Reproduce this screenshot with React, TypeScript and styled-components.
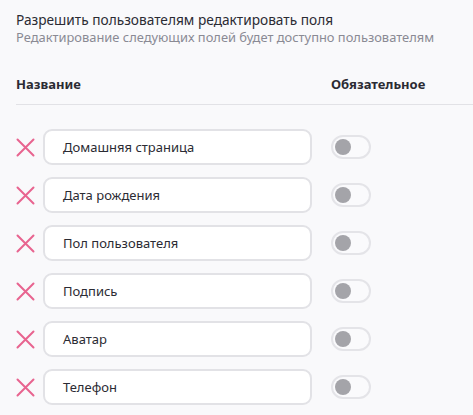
import styled, { createGlobalStyle } from "styled-components";

const fields = [
  "Домашняя страница",
  "Дата рождения",
  "Пол пользователя",
  "Подпись",
  "Аватар",
  "Телефон",
];

const GlobalStyle = createGlobalStyle`
  body {
    margin: 0;
    background: #f9f9fb;
    font-family: "Noto Sans", "Open Sans", sans-serif;
    color: #2b2b33;
  }
`;

const RemoveIcon = () => (
  <svg width="19" height="19" viewBox="0 0 19 19">
    <path
      d="M1.5 1.5 L17.5 17.5 M17.5 1.5 L1.5 17.5"
      stroke="#e8648f"
      strokeWidth="2"
      strokeLinecap="round"
    />
  </svg>
);

export default function App() {
  return (
    <Root>
      <GlobalStyle />
      <Title>Разрешить пользователям редактировать поля</Title>
      <Subtitle>Редактирование следующих полей будет доступно пользователям</Subtitle>
      <Header>
        <HeaderName>Название</HeaderName>
        <HeaderRequired>Обязательное</HeaderRequired>
      </Header>
      <List>
        {fields.map((f) => (
          <Row key={f}>
            <RemoveButton>
              <RemoveIcon />
            </RemoveButton>
            <FieldBox>{f}</FieldBox>
            <Toggle>
              <Knob />
            </Toggle>
          </Row>
        ))}
      </List>
    </Root>
  );
}

const Root = styled.div`
  padding: 11px 0 0 16px;
`;

const Title = styled.div`
  font-size: 13.7px;
  line-height: 18px;
  color: #2b2b33;
`;

const Subtitle = styled.div`
  font-size: 12.9px;
  line-height: 16px;
  color: #8a8a94;
`;

const Header = styled.div`
  display: flex;
  align-items: center;
  margin-top: 30px;
  line-height: 18px;
  border-bottom: 1px solid #e2e2e6;
  font-size: 13px;
  font-weight: 700;
  padding-bottom: 11px;
`;

const HeaderName = styled.div`
  width: 315px;
`;

const HeaderRequired = styled.div``;

const List = styled.div`
  display: flex;
  flex-direction: column;
  gap: 12px;
  margin-top: 24px;
`;

const Row = styled.div`
  display: flex;
  align-items: center;
  height: 36px;
`;

const RemoveButton = styled.div`
  width: 27px;
  display: flex;
  align-items: center;
`;

const FieldBox = styled.div`
  box-sizing: border-box;
  width: 269px;
  height: 36px;
  border: 2px solid #e2e2e6;
  border-radius: 9px;
  background: #fff;
  display: flex;
  align-items: center;
  padding-left: 18px;
  font-size: 13px;
  color: #2b2b33;
`;

const Toggle = styled.div`
  box-sizing: border-box;
  margin-left: 19px;
  width: 40px;
  height: 24px;
  border: 2px solid #e4e4e8;
  border-radius: 12px;
  background: #fafafc;
  display: flex;
  align-items: center;
  padding-left: 2px;
`;

const Knob = styled.div`
  width: 16px;
  height: 16px;
  border-radius: 50%;
  background: #a4a4a9;
`;
